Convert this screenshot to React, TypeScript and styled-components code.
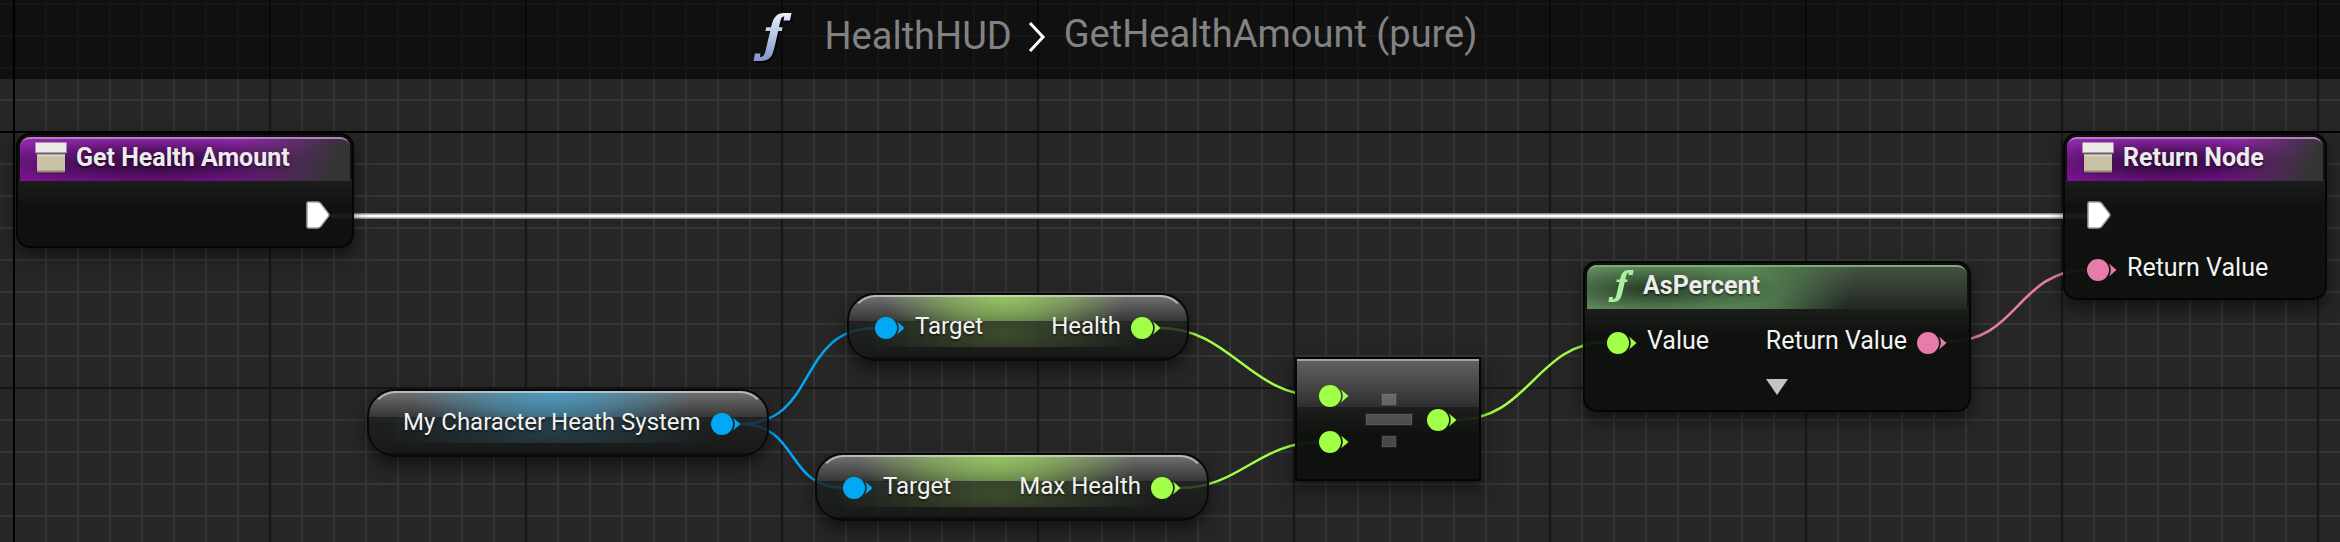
import React from "react";
import styled, { createGlobalStyle, css } from "styled-components";

const GlobalStyle = createGlobalStyle`
  *, *::before, *::after { box-sizing: border-box; }
  body { margin: 0; background: #262626; font-family: Roboto, "Liberation Sans", sans-serif; }
  h1, h2, p { margin: 0; }
`;

const LIME = "#a0ff46";
const BLUE = "#00a8f5";
const PINK = "#e77ba9";
const WHITE = "#ffffff";

/* The grid: the two origin axes, then major lines each 256px, then minor lines each 32px. */
const Editor = styled.div`
  display: flex;
  flex-direction: column;
  min-height: 100vh;
  overflow: hidden;
  background-color: #262626;
  background-image:
    linear-gradient(#000, #000),
    linear-gradient(#000, #000),
    linear-gradient(#161616 2px, transparent 2px),
    linear-gradient(90deg, #161616 2px, transparent 2px),
    linear-gradient(#353535 2px, transparent 2px),
    linear-gradient(90deg, #353535 2px, transparent 2px);
  background-size: 100% 2px, 2px 100%, 256px 256px, 256px 256px, 32px 32px, 32px 32px;
  background-position: 0 131px, 13px 0, 13px 131px, 13px 131px, 13px 3px, 13px 3px;
  background-repeat: no-repeat, no-repeat, repeat, repeat, repeat, repeat;
`;

const TitleBar = styled.header`
  display: flex;
  justify-content: center;
  height: 79px;
  padding: 4px 110px 0 0;
  background: rgba(0, 0, 0, 0.58);
`;

const TitleIcon = styled.svg`
  width: 40px;
  height: 52px;
  margin: 8px 32px 0 0;
`;

const Crumb = styled.span`
  font-size: 38px;
  line-height: 64px;
  color: #828282;
`;

const PageName = styled.h1`
  font-size: 38px;
  font-weight: 400;
  line-height: 60px;
  color: #828282;
`;

const Chevron = styled.svg`
  width: 18px;
  height: 32px;
  margin: 17px 18px 0 16px;
`;

const Canvas = styled.main`
  position: relative;
  flex: 1;
`;

const Wires = styled.svg`
  position: absolute;
  left: 0;
  top: 0;
  width: 100%;
  height: 100%;
  overflow: visible;
  fill: none;
`;

interface Place { $x: number; $y: number; $w: number }

const placed = css<Place>`
  position: absolute;
  left: ${(p) => p.$x}px;
  top: ${(p) => p.$y}px;
  width: ${(p) => p.$w}px;
`;

const Card = styled.article<Place>`
  ${placed}
  padding: 2px 2px 0;
  border: 2px solid #050505;
  border-radius: 14px;
  background: linear-gradient(rgba(14, 14, 14, 0.9) 44px, rgba(27, 29, 27, 0.92) 45px, rgba(13, 16, 13, 0.94) 72px);
  box-shadow: 0 8px 16px rgba(0, 0, 0, 0.5);
`;

const tones = {
  purple: css`
    background:
      linear-gradient(112deg, rgba(52, 52, 52, 0) 62%, rgba(52, 52, 52, 1) 94%),
      radial-gradient(ellipse 56% 58% at 40% 58%, rgba(44, 8, 54, 0.9), rgba(44, 8, 54, 0.65) 40%, rgba(44, 8, 54, 0)),
      linear-gradient(#9029a8, #7d1296);
    --edge: #b67fc4;
  `,
  green: css`
    background:
      radial-gradient(ellipse 130px 28px at 64px 24px, rgba(34, 54, 34, 0.95), rgba(34, 54, 34, 0)),
      linear-gradient(112deg, #6d9c69 0, #5f915c 130px, #4d724a 190px, rgba(56, 74, 56, 0) 256px),
      linear-gradient(#465344, #222722);
    --edge: #7aad75;
  `,
};

const CardHead = styled.header<{ $tone: keyof typeof tones; $inset: number }>`
  position: relative;
  display: flex;
  align-items: center;
  gap: 9px;
  height: 44px;
  padding: 0 ${(p) => p.$inset}px 2px;
  border-radius: 10px 10px 0 0;
  ${(p) => tones[p.$tone]}

  &::after {
    content: "";
    position: absolute;
    inset: 0;
    border-top: 2px solid var(--edge);
    border-radius: inherit;
  }
`;

const CardTitle = styled.h2`
  font-size: 25px;
  font-weight: 700;
  line-height: 32px;
  color: #ececec;
  white-space: nowrap;
  text-shadow: 0 2px 2px rgba(0, 0, 0, 0.4);
`;

const CardBody = styled.div<{ $height: number }>`
  display: flex;
  flex-direction: column;
  gap: 23px;
  height: ${(p) => p.$height}px;
  padding: 18px 20px 0;
`;

const PinRow = styled.div<{ $end?: boolean }>`
  display: flex;
  align-items: center;
  justify-content: ${(p) => (p.$end ? "flex-end" : "space-between")};
  height: 32px;
`;

const PinSlot = styled.div`
  display: flex;
  align-items: center;
  gap: 10px;
`;

const PinLabel = styled.span<{ $large?: boolean }>`
  margin-bottom: 4px;
  font-size: ${(p) => (p.$large ? 25 : 24)}px;
  line-height: 32px;
  color: #f2f2f2;
  white-space: nowrap;
  text-shadow: 0 2px 2px rgba(0, 0, 0, 0.5);
`;

const DotIcon = styled.svg`
  display: block;
  flex: none;
  width: 30px;
  height: 24px;
`;

const ExecIcon = styled.svg`
  display: block;
  flex: none;
  width: 24px;
  height: 28px;
`;

const ExpandButton = styled.button`
  display: block;
  align-self: center;
  width: 24px;
  height: 18px;
  margin-top: -4px;
  padding: 0;
  border: 0;
  background: none;
`;

const Pill = styled.article<Place & { $glow: string; $inset: number }>`
  ${placed}
  display: flex;
  align-items: center;
  justify-content: space-between;
  height: 68px;
  padding: 2px 26px 0 ${(p) => p.$inset}px;
  border: 2px solid #080808;
  border-radius: 28px;
  background:
    radial-gradient(ellipse 36% 60px at 46% 0, rgba(${(p) => p.$glow}, 0.8), rgba(${(p) => p.$glow}, 0.5) 45%, rgba(${(p) => p.$glow}, 0)) 0 0 / 100% 26px no-repeat,
    radial-gradient(ellipse 42% 50px at 46% 50%, rgba(${(p) => p.$glow}, 0.24), rgba(${(p) => p.$glow}, 0)) 0 26px / 100% 26px no-repeat,
    linear-gradient(rgba(140, 140, 140, 0.75), rgba(62, 62, 62, 0.75)) 0 0 / 100% 26px no-repeat,
    linear-gradient(rgba(30, 32, 32, 0.8) 26px, rgba(22, 24, 22, 0.86) 60px, rgba(8, 8, 8, 0.9) 64px);
  box-shadow: 0 8px 16px rgba(0, 0, 0, 0.5);

  &::before {
    content: "";
    position: absolute;
    inset: 0 1px 30px;
    border: 2px solid transparent;
    border-top-color: rgba(225, 225, 225, 0.65);
    border-radius: 26px 26px 0 0;
  }
`;

const MathNode = styled.article<Place>`
  ${placed}
  display: flex;
  justify-content: space-between;
  height: 124px;
  padding: 25px 22px 0;
  border: 2px solid #050505;
  background:
    linear-gradient(#a3a3a3, #a3a3a3) 0 0 / 100% 2px no-repeat,
    linear-gradient(#636363, #2f2f2f) 0 0 / 100% 48px no-repeat,
    linear-gradient(rgba(27, 29, 27, 0.92) 48px, rgba(13, 16, 13, 0.95) 76px);
  box-shadow: 0 8px 16px rgba(0, 0, 0, 0.5);
`;

const MathInputs = styled.div`
  display: flex;
  flex-direction: column;
  gap: 22px;
`;

const MathOutput = styled.div`
  padding-top: 24px;
`;

const DivideIcon = styled.svg`
  width: 50px;
  height: 56px;
  margin: 8px 0 0 2px;
`;

const Dot = ({ color, name }: { color: string; name: string }) => (
  <DotIcon viewBox="0 0 30 24" role="img" aria-label={name}>
    <circle cx="11" cy="12" r="11" fill={color} />
    <path d="M22 5.5 L29.5 12 L22 18.5 Q25.5 12 22 5.5 Z" fill={color} />
  </DotIcon>
);

const Exec = () => (
  <ExecIcon viewBox="0 0 24 28" role="img" aria-label="Exec">
    <path d="M1 2.5 Q1 1 2.5 1 H11 Q13 1 14.5 2.3 L22.4 12.6 Q23.4 14 22.4 15.4 L14.5 25.7 Q13 27 11 27 H2.5 Q1 27 1 25.5 Z" fill="#fff" stroke="#a0a0a0" strokeWidth="1.5" />
  </ExecIcon>
);

const BoxSvg = styled.svg`
  flex: none;
  width: 32px;
  height: 32px;
`;

const BoxIcon = () => (
  <BoxSvg viewBox="0 0 32 32" aria-hidden="true">
    <rect x="1.5" y="3" width="29" height="29" fill="#2a0733" opacity="0.35" />
    <rect x="0.5" y="0.5" width="31" height="10.5" fill="#e9ece3" />
    <rect x="1" y="10.5" width="30" height="2" fill="#6f5573" />
    <rect x="2" y="12.5" width="28" height="17.5" fill="#c9c2a7" />
    <rect x="2" y="12.5" width="28" height="2" fill="#d8cfc0" />
    <rect x="2" y="28.5" width="28" height="2" fill="#94876f" />
  </BoxSvg>
);

const FSvg = styled.svg`
  flex: none;
  width: 26px;
  height: 34px;
`;

/* Function symbol: a slanted stem with a ball at each end and a crossbar. */
const fShape =
  "M38.5 1 L37 8.5 H30.5 L31.3 4.6 Q28.4 4.6 27.4 9 L26 15.2 H29.6 L28.8 19 H25.2 L21 37.5 Q18.3 49 9 49 H0.5 L2 41.5 H7.5 L7 45 Q11 45.6 12.6 38.5 L17.2 19 H12.4 L13.2 15.2 H18 L19 11.5 Q21.8 1 30 1 Z";

interface NodeProps { x: number; y: number; w: number }

interface VariableProps extends NodeProps {
  output: string;
  target?: boolean;
  glow: string;
  color: string;
}

const VariableNode = ({ x, y, w, output, target, glow, color }: VariableProps) => (
  <Pill $x={x} $y={y} $w={w} $glow={glow} $inset={target ? 26 : 34}>
    {target && (
      <PinSlot>
        <Dot color={BLUE} name="Target input" />
        <PinLabel>Target</PinLabel>
      </PinSlot>
    )}
    <PinSlot>
      <PinLabel>{output}</PinLabel>
      <Dot color={color} name={output + " output"} />
    </PinSlot>
  </Pill>
);

export default function App() {
  return (
    <>
      <GlobalStyle />
      <Editor>
        <TitleBar>
          <TitleIcon viewBox="0 0 40 52" aria-hidden="true">
            <defs>
              <linearGradient id="titleF" x1="0" y1="0" x2="0" y2="1">
                <stop offset="0" stopColor="#e9eefc" />
                <stop offset="1" stopColor="#8294cf" />
              </linearGradient>
            </defs>
            <path d={fShape} fill="#000" opacity="0.6" transform="translate(2 2)" />
            <path d={fShape} fill="url(#titleF)" />
          </TitleIcon>
          <Crumb>HealthHUD</Crumb>
          <Chevron viewBox="0 0 18 32" aria-hidden="true">
            <path d="M2 2 L15 16 L2 30" fill="none" stroke="#fff" strokeWidth="3" />
          </Chevron>
          <PageName>GetHealthAmount (pure)</PageName>
        </TitleBar>

        <Canvas>
          <Wires aria-hidden="true">
            <path d="M330 137 H2088" stroke="#8a8a8a" strokeWidth="6" />
            <path d="M330 137 H2088" stroke={WHITE} strokeWidth="3" />
            <g strokeWidth="2.5">
              <path d="M740 345 C820 345 795 249 876 249" stroke={BLUE} />
              <path d="M740 345 C800 345 785 409 844 409" stroke={BLUE} />
              <path d="M1160 249 C1230 249 1250 317 1320 317" stroke={LIME} />
              <path d="M1180 409 C1240 409 1258 363 1320 363" stroke={LIME} />
              <path d="M1456 341 C1530 341 1536 263 1608 263" stroke={LIME} />
              <path d="M1946 263 C2020 263 2016 191 2088 191" stroke={PINK} />
            </g>
          </Wires>

          <Card $x={16} $y={54} $w={338}>
            <CardHead $tone="purple" $inset={15}>
              <BoxIcon />
              <CardTitle>Get Health Amount</CardTitle>
            </CardHead>
            <CardBody $height={65}>
              <PinRow $end>
                <Exec />
              </PinRow>
            </CardBody>
          </Card>

          <Card $x={2063} $y={54} $w={264}>
            <CardHead $tone="purple" $inset={15}>
              <BoxIcon />
              <CardTitle>Return Node</CardTitle>
            </CardHead>
            <CardBody $height={117}>
              <PinRow>
                <Exec />
              </PinRow>
              <PinRow>
                <PinSlot>
                  <Dot color={PINK} name="Return Value input" />
                  <PinLabel $large>Return Value</PinLabel>
                </PinSlot>
              </PinRow>
            </CardBody>
          </Card>

          <Card $x={1583} $y={182} $w={388}>
            <CardHead $tone="green" $inset={21}>
              <FSvg viewBox="0 0 39 50" aria-hidden="true">
                <path d={fShape} fill="#a9f0a2" />
              </FSvg>
              <CardTitle>AsPercent</CardTitle>
            </CardHead>
            <CardBody $height={101}>
              <PinRow>
                <PinSlot>
                  <Dot color={LIME} name="Value input" />
                  <PinLabel $large>Value</PinLabel>
                </PinSlot>
                <PinSlot>
                  <PinLabel $large>Return Value</PinLabel>
                  <Dot color={PINK} name="Return Value output" />
                </PinSlot>
              </PinRow>
              <ExpandButton aria-label="Show advanced pins">
                <svg width="24" height="18" viewBox="0 0 24 18">
                  <path d="M1 1 H23 L12 17 Z" fill="#c4c4c4" />
                </svg>
              </ExpandButton>
            </CardBody>
          </Card>

          <VariableNode x={367} y={310} w={402} output="My Character Heath System" glow="70, 165, 210" color={BLUE} />
          <VariableNode x={847} y={214} w={342} output="Health" target glow="160, 220, 95" color={LIME} />
          <VariableNode x={815} y={374} w={394} output="Max Health" target glow="160, 220, 95" color={LIME} />

          <MathNode $x={1295} $y={278} $w={186}>
            <MathInputs>
              <Dot color={LIME} name="Dividend" />
              <Dot color={LIME} name="Divisor" />
            </MathInputs>
            <DivideIcon viewBox="0 0 50 56" role="img" aria-label="Divide">
              <g fill="#fff" fillOpacity="0.24" stroke="#fff" strokeOpacity="0.06" strokeWidth="2">
                <rect x="18" y="2" width="14" height="11" />
                <rect x="2" y="22" width="46" height="11" />
                <rect x="18" y="44" width="14" height="11" />
              </g>
            </DivideIcon>
            <MathOutput>
              <Dot color={LIME} name="Quotient" />
            </MathOutput>
          </MathNode>
        </Canvas>
      </Editor>
    </>
  );
}
